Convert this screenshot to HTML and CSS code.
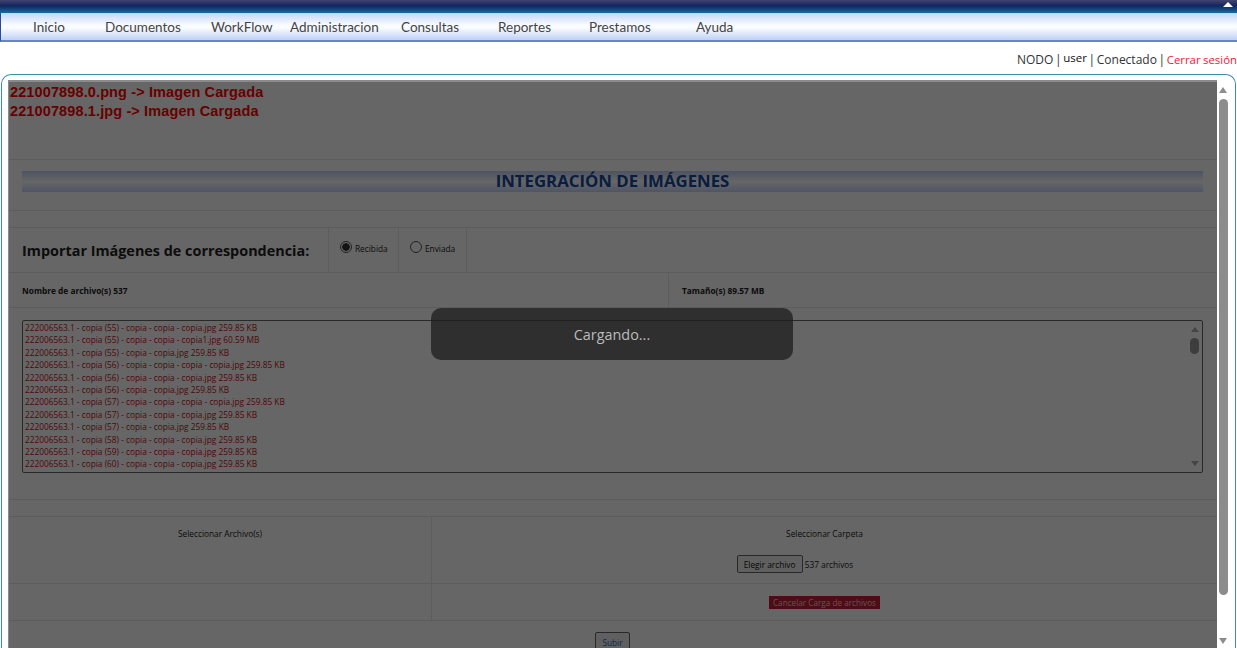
FILE: index.html
```html
<!DOCTYPE html>
<html lang="es">

<head>
    <meta charset="UTF-8">
    <title>Integracion de Imagenes</title>
    <link rel="stylesheet" href="styles.css">
</head>

<body>
    <div class="topbar"><span class="collapse"></span></div>
    <nav class="menu">
        <a>Inicio</a>
        <a>Documentos</a>
        <a>WorkFlow</a>
        <a>Administracion</a>
        <a>Consultas</a>
        <a>Reportes</a>
        <a>Prestamos</a>
        <a>Ayuda</a>
    </nav>
    <div class="status">
        NODO | <span class="user">user</span> | Conectado | <span class="logout">Cerrar sesión</span>
    </div>

    <div class="frame">
        <div class="content">
            <div class="messages">
                <p>221007898.0.png -&gt; Imagen Cargada</p>
                <p>221007898.1.jpg -&gt; Imagen Cargada</p>
            </div>

            <div class="title-row">
                <h1>INTEGRACIÓN DE IMÁGENES</h1>
            </div>

            <div class="import-row">
                <h2>Importar Imágenes de correspondencia:</h2>
                <label class="radio-cell"><span class="radio checked"></span>Recibida</label>
                <label class="radio-cell"><span class="radio"></span>Enviada</label>
            </div>

            <div class="info-row">
                <div class="info-name">Nombre de archivo(s) 537</div>
                <div class="info-size">Tamaño(s) 89.57 MB</div>
            </div>

            <div class="list-row">
                <div class="file-list">
                    <p>222006563.1 - copia (55) - copia - copia - copia.jpg 259.85 KB</p>
                    <p>222006563.1 - copia (55) - copia - copia - copia1.jpg 60.59 MB</p>
                    <p>222006563.1 - copia (55) - copia - copia.jpg 259.85 KB</p>
                    <p>222006563.1 - copia (56) - copia - copia - copia - copia.jpg 259.85 KB</p>
                    <p>222006563.1 - copia (56) - copia - copia - copia.jpg 259.85 KB</p>
                    <p>222006563.1 - copia (56) - copia - copia.jpg 259.85 KB</p>
                    <p>222006563.1 - copia (57) - copia - copia - copia - copia.jpg 259.85 KB</p>
                    <p>222006563.1 - copia (57) - copia - copia - copia.jpg 259.85 KB</p>
                    <p>222006563.1 - copia (57) - copia - copia.jpg 259.85 KB</p>
                    <p>222006563.1 - copia (58) - copia - copia - copia.jpg 259.85 KB</p>
                    <p>222006563.1 - copia (59) - copia - copia - copia.jpg 259.85 KB</p>
                    <p>222006563.1 - copia (60) - copia - copia - copia.jpg 259.85 KB</p>
                    <span class="list-up"></span>
                    <span class="list-thumb"></span>
                    <span class="list-down"></span>
                </div>
            </div>

            <div class="select-row">
                <div class="select-left">Seleccionar Archivo(s)</div>
                <div class="select-right">
                    <div>Seleccionar Carpeta</div>
                    <div class="file-input"><button>Elegir archivo</button> 537 archivos</div>
                </div>
            </div>

            <div class="cancel-row">
                <div class="cancel-left"></div>
                <div class="cancel-right"><span class="cancel">Cancelar Carga de archivos</span></div>
            </div>

            <div class="submit-row"><button class="submit">Subir</button></div>

            <div class="overlay"></div>
            <div class="loading">Cargando...</div>
        </div>

        <div class="scrollbar">
            <span class="arrow-up"></span>
            <span class="thumb"></span>
            <span class="arrow-down"></span>
        </div>
    </div>
</body>

</html>
```
FILE: styles.css
```css
html,
body {
    height: 100%;
    overflow: hidden;
}

body {
    margin: 0;
    background: #fff;
    font-family: "Open Sans", sans-serif;
    color: #222;
}

p,
h1,
h2 {
    margin: 0;
}

.topbar {
    position: relative;
    height: 13px;
    background: linear-gradient(#44446e 0, #10265f 45%, #1a6a9f 100%);
}

.collapse {
    position: absolute;
    right: 4px;
    top: 2px;
    border-left: 5px solid transparent;
    border-right: 5px solid transparent;
    border-bottom: 5px solid #fff;
}

.menu {
    display: grid;
    grid-template-columns: 72px 106px 79px 111px 97px 91px 107px 100px;
    align-items: center;
    height: 27px;
    padding-left: 32px;
    border-left: 1px solid #2a4aa0;
    border-bottom: 2px solid #6a82c8;
    background: linear-gradient(#c3d6fa 0, #fafcff 45%, #fafcff 55%, #bfd0f6 100%);
    font-family: "Lato", sans-serif;
    font-size: 13.5px;
    color: #444;
}

.status {
    height: 32px;
    line-height: 36px;
    text-align: right;
    white-space: nowrap;
    font-size: 12px;
    word-spacing: -1.5px;
    color: #333;
}

.user {
    position: relative;
    top: -2px;
    font-size: 11.5px;
    color: #111;
}

.logout {
    font-size: 11.4px;
    word-spacing: -0.5px;
    color: #f02030;
}

.frame {
    display: flex;
    box-sizing: border-box;
    height: 574px;
    margin: 0 1px;
    padding: 5px 4px 0 6px;
    border: 1px solid #3f8ca8;
    border-bottom: none;
    border-radius: 10px 10px 0 0;
}

.content {
    position: relative;
    width: 1209px;
    height: 568px;
    overflow: hidden;
    color: #222;
}

.overlay {
    position: absolute;
    inset: 0;
    background: rgba(0, 0, 0, 0.6);
    box-shadow: inset 0 2px 0 #8a8a8a, inset 1px 0 0 #8a8a8a;
}

.messages {
    position: relative;
    z-index: 2;
    height: 76px;
    padding: 3px 0 0 2px;
    font-family: "Liberation Sans", sans-serif;
    font-weight: bold;
    font-size: 14.5px;
    line-height: 19px;
    letter-spacing: 0.12px;
    color: #680000;
}

.title-row {
    height: 52px;
    margin-left: 1px;
    padding: 11px 14px 0 13px;
    box-sizing: border-box;
    border-top: 1px solid #e6e6e6;
    border-bottom: 1px solid #e6e6e6;
}

h1 {
    height: 21px;
    background: linear-gradient(#c0cff5, #fff 50%, #c8d6fa);
    text-align: center;
    font-size: 16.8px;
    line-height: 20px;
    color: #164a9e;
}

.import-row {
    display: grid;
    grid-template-columns: 319px 70px 69px;
    height: 46px;
    margin: 16px 0 0 1px;
    box-sizing: border-box;
    border-top: 1px solid #e6e6e6;
    border-bottom: 1px solid #e6e6e6;
}

h2 {
    padding: 13px 0 0 13px;
    font-size: 14.4px;
    line-height: 20px;
}

.radio-cell {
    display: flex;
    align-items: flex-start;
    padding: 13px 0 0 11px;
    border-left: 1px solid #e6e6e6;
    font-size: 8.3px;
    line-height: 16px;
}

.radio-cell:last-child {
    border-right: 1px solid #e6e6e6;
}

.radio {
    box-sizing: border-box;
    width: 12px;
    height: 12px;
    margin-right: 3px;
    border: 1px solid #555;
    border-radius: 50%;
    background: #fff;
}

.radio.checked {
    background: radial-gradient(circle, #333 0 3.5px, #fff 4px);
}

.info-row {
    display: grid;
    grid-template-columns: 659px 1fr;
    height: 35px;
    margin-left: 1px;
    box-sizing: border-box;
    border-bottom: 1px solid #e6e6e6;
    font-size: 8.3px;
    font-weight: bold;
    line-height: 36px;
}

.info-name {
    padding-left: 13px;
}

.info-size {
    padding-left: 13px;
    border-left: 1px solid #e6e6e6;
}

.list-row {
    height: 192px;
    margin-left: 1px;
    padding: 12px 14px 0 13px;
    box-sizing: border-box;
    border-bottom: 1px solid #e6e6e6;
}

.file-list {
    position: relative;
    height: 153px;
    box-sizing: border-box;
    padding: 1px 0 0 2px;
    border: 1px solid #666;
    border-radius: 2px;
    font-size: 8.32px;
    line-height: 12.4px;
    color: #c81020;
}

.list-up,
.list-down,
.list-thumb,
.arrow-up,
.arrow-down,
.thumb {
    position: absolute;
}

.list-up {
    top: 6px;
    right: 3px;
    border-left: 4px solid transparent;
    border-right: 4px solid transparent;
    border-bottom: 5px solid #aaa;
}

.list-down {
    bottom: 6px;
    right: 3px;
    border-left: 4px solid transparent;
    border-right: 4px solid transparent;
    border-top: 5px solid #aaa;
}

.list-thumb {
    top: 17px;
    right: 3px;
    width: 9px;
    height: 16px;
    border-radius: 5px;
    background: #999;
}

.select-row,
.cancel-row {
    display: grid;
    grid-template-columns: 422px 1fr;
    margin-left: 1px;
    box-sizing: border-box;
    border-bottom: 1px solid #e6e6e6;
    text-align: center;
    font-size: 8.3px;
}

.select-row {
    height: 68px;
    margin-top: 16px;
    border-top: 1px solid #e6e6e6;
    line-height: 12px;
}

.select-left,
.select-right {
    padding-top: 11px;
}

.select-right,
.cancel-right {
    border-left: 1px solid #e6e6e6;
}

.file-input {
    margin-top: 15px;
    padding-right: 59px;
}

.file-input button {
    height: 18px;
    padding: 0 6px;
    border: 1px solid #666;
    border-radius: 2px;
    background: #efefef;
    font-family: inherit;
    font-size: 8.3px;
    color: #111;
}

.cancel-row {
    height: 37px;
}

.cancel-right {
    padding-top: 12px;
}

.cancel {
    display: inline-block;
    padding: 0 4px;
    background: #c02038;
    color: #ffc8d0;
    font-size: 8.2px;
    line-height: 13px;
}

.submit-row {
    padding-top: 11px;
}

.submit {
    display: block;
    height: 20px;
    margin: 0 auto;
    padding: 0 6px;
    border: 1px solid #666;
    border-radius: 2px;
    background: #efefef;
    font-family: inherit;
    font-size: 8.3px;
    color: #2a60c0;
}

.loading {
    position: absolute;
    left: 423px;
    top: 228px;
    width: 362px;
    height: 52px;
    border-radius: 10px;
    background: rgba(30, 30, 30, 0.75);
    text-align: center;
    font-size: 14.4px;
    line-height: 53px;
    color: #bbb;
}

.scrollbar {
    position: relative;
    flex: 1;
    height: 568px;
}

.arrow-up {
    top: 7px;
    left: 2px;
    border-left: 4px solid transparent;
    border-right: 4px solid transparent;
    border-bottom: 6px solid #8c8c8c;
}

.arrow-down {
    bottom: 4px;
    left: 2px;
    border-left: 4px solid transparent;
    border-right: 4px solid transparent;
    border-top: 6px solid #8c8c8c;
}

.thumb {
    top: 19px;
    left: 2px;
    width: 9px;
    height: 496px;
    border-radius: 5px;
    background: #8c8c8c;
}
```
